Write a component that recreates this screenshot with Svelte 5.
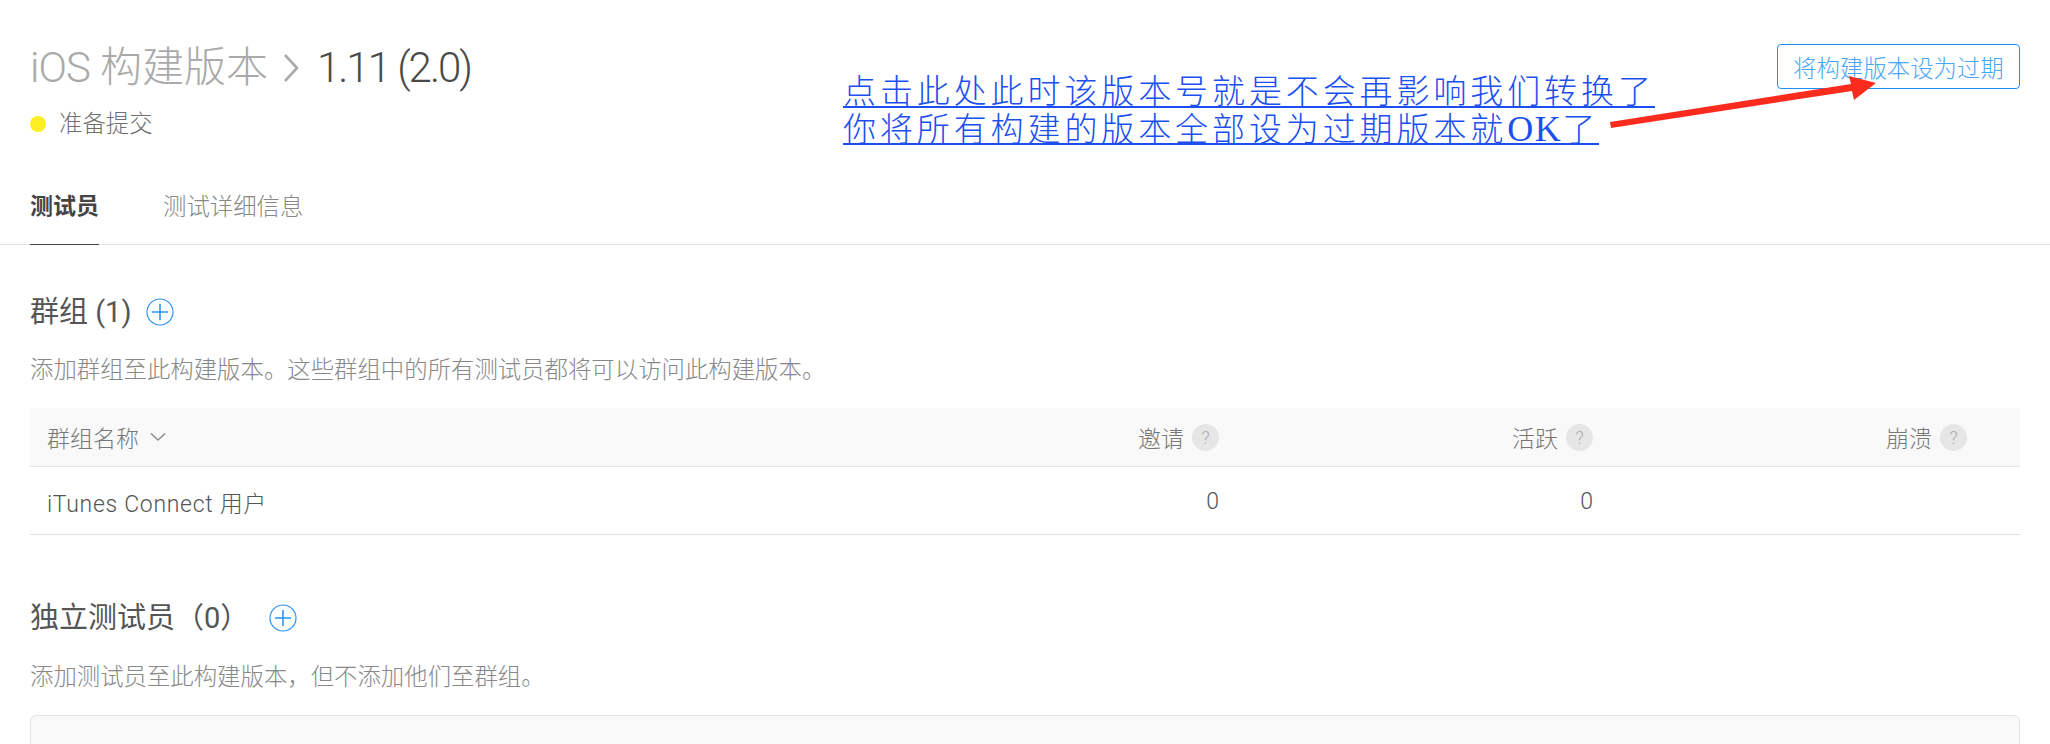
<script>
    const columns = ['邀请', '活跃', '崩溃'];
    const groups = [{ name: 'iTunes Connect 用户', values: ['0', '0', ''] }];
</script>

<div class="page">
    <header class="header">
        <div>
            <h1 class="title">
                <span class="crumb"><span class="ios">iOS</span> 构建版本</span>
                <svg class="crumb-arrow" width="17" height="28" viewBox="0 0 17 28">
                    <path d="M2 1 L14 14 L2 27" fill="none" stroke="#a9aaaa" stroke-width="2.6" />
                </svg>
                <span class="version">1.11 (2.0)</span>
            </h1>
            <div class="status"><span class="dot"></span>准备提交</div>
        </div>
        <button class="expire">将构建版本设为过期</button>
    </header>

    <nav class="tabs">
        <div class="tab active">测试员</div>
        <div class="tab">测试详细信息</div>
    </nav>

    <section class="section">
        <h2>
            群组 (1)
            <svg class="plus" width="28" height="28" viewBox="0 0 28 28">
                <circle cx="14" cy="14" r="13" fill="none" stroke="#2a94f4" stroke-width="1.2" />
                <path d="M6 14 H22 M14 6 V22" stroke="#2a94f4" stroke-width="1.6" />
            </svg>
        </h2>
        <p class="desc">添加群组至此构建版本。这些群组中的所有测试员都将可以访问此构建版本。</p>
        <div class="table">
            <div class="row head">
                <div class="name">
                    群组名称
                    <svg width="16" height="10" viewBox="0 0 16 10">
                        <path d="M1 1.5 L8 8 L15 1.5" fill="none" stroke="#8c8c8c" stroke-width="1.5" />
                    </svg>
                </div>
                {#each columns as col}
                    <div class="num">{col}<span class="help">?</span></div>
                {/each}
            </div>
            {#each groups as group}
                <div class="row body">
                    <div class="name wide-text">{group.name}</div>
                    {#each group.values as value}
                        <div class="num">{value}</div>
                    {/each}
                </div>
            {/each}
        </div>
    </section>

    <section class="section second">
        <h2>
            独立测试员（0）
            <svg class="plus wide" width="28" height="28" viewBox="0 0 28 28">
                <circle cx="14" cy="14" r="13" fill="none" stroke="#2a94f4" stroke-width="1.2" />
                <path d="M6 14 H22 M14 6 V22" stroke="#2a94f4" stroke-width="1.6" />
            </svg>
        </h2>
        <p class="desc">添加测试员至此构建版本，但不添加他们至群组。</p>
        <div class="empty"></div>
    </section>

    <!-- annotation drawn over the screenshot -->
    <div class="note">
        <div>点击此处此时该版本号就是不会再影响我们转换了</div>
        <div>你将所有构建的版本全部设为过期版本就<span class="ok">OK</span>了</div>
    </div>
    <svg class="arrow" width="2050" height="200" viewBox="0 0 2050 200">
        <path d="M1610 122 L1851 84 L1849 76 L1876 83 L1854 100 L1852 91 L1611 128 Z" fill="#fb2c1e" />
    </svg>
</div>

<style>
    :global(body) {
        margin: 0;
        background: #fff;
    }

    .page {
        position: relative;
        width: 2050px;
        height: 744px;
        overflow: hidden;
        box-sizing: border-box;
        padding: 0 30px;
        font-family: Roboto, "Noto Sans CJK SC", sans-serif;
        font-weight: 300;
        color: #444;
        text-spacing-trim: space-all;
    }

    .header {
        display: flex;
        justify-content: space-between;
        align-items: flex-start;
    }

    .title {
        display: flex;
        align-items: center;
        margin: 43px 0 0;
        font-size: 42px;
        line-height: 50px;
        font-weight: 300;
        color: #4a4a4a;
    }

    .ios {
        letter-spacing: -1px;
    }

    .version {
        letter-spacing: -2px;
    }

    .crumb {
        color: #aaa;
    }

    .crumb-arrow {
        margin: 0 17px 0 15px;
    }

    .status {
        display: flex;
        align-items: center;
        margin-top: 16px;
        font-size: 23.4px;
        line-height: 30px;
        color: #707070;
    }

    .dot {
        width: 16px;
        height: 16px;
        margin-right: 13px;
        border-radius: 50%;
        background: #fdee21;
    }

    .expire {
        box-sizing: border-box;
        width: 243px;
        height: 45px;
        margin-top: 44px;
        padding: 0;
        border: 1px solid #1d8ff5;
        border-radius: 4px;
        background: #fff;
        font: inherit;
        font-size: 23.4px;
        color: #4aa6f8;
    }

    .tabs {
        display: flex;
        gap: 64px;
        margin: 50px -30px 0;
        padding: 0 30px;
        border-bottom: 1px solid #e3e3e3;
    }

    .tab {
        height: 55px;
        padding-top: 3px;
        box-sizing: border-box;
        font-size: 23.4px;
        line-height: 30px;
        color: #888;
    }

    .tab.active {
        margin-bottom: -1px;
        height: 56px;
        border-bottom: 1px solid #444;
        font-size: 23px;
        font-weight: 700;
        color: #444;
    }

    .section {
        margin-top: 47px;
    }

    .section.second {
        margin-top: 63px;
    }

    h2 {
        display: flex;
        align-items: center;
        margin: 0;
        font-size: 29px;
        line-height: 40px;
        font-weight: 400;
        color: #555;
    }

    .plus {
        margin-left: 14px;
    }

    .plus.wide {
        margin-left: 20px;
    }

    .desc {
        margin: 23px 0;
        font-size: 23.4px;
        line-height: 30px;
        color: #888;
    }

    .second .desc {
        margin-top: 24px;
    }

    .row {
        display: grid;
        grid-template-columns: 1fr 374px 374px 374px;
        align-items: center;
        padding: 0 53px 0 17px;
        border-bottom: 1px solid #e3e3e3;
        font-size: 23px;
    }

    .row.head {
        height: 58px;
        background: #f9f9f9;
        color: #777;
    }

    .row.body {
        height: 65px;
        padding-top: 2px;
        color: #555;
    }

    .name {
        display: flex;
        align-items: center;
        gap: 11px;
    }

    .wide-text {
        letter-spacing: 0.7px;
    }

    .num {
        display: flex;
        align-items: center;
        justify-content: flex-end;
    }

    .help {
        width: 27px;
        height: 27px;
        margin-left: 8px;
        border-radius: 50%;
        background: #e6e6e6;
        font-size: 18px;
        line-height: 27px;
        text-align: center;
        color: #aaa;
    }

    .empty {
        box-sizing: border-box;
        height: 100px;
        border: 1px solid #e3e3e3;
        border-radius: 6px;
        background: #f9f9f9;
    }

    .note {
        position: absolute;
        left: 843px;
        top: 71px;
        font-family: "Liberation Serif", "Noto Sans CJK SC", serif;
        font-weight: 300;
        font-size: 33px;
        line-height: 42px;
        letter-spacing: 3.9px;
        color: #1c4ff0;
    }

    .note div {
        width: fit-content;
        height: 35px;
        border-bottom: 2px solid #1c4ff0;
    }

    .ok {
        font-size: 36px;
        letter-spacing: 1.5px;
    }

    .arrow {
        position: absolute;
        left: 0;
        top: 0;
    }
</style>
